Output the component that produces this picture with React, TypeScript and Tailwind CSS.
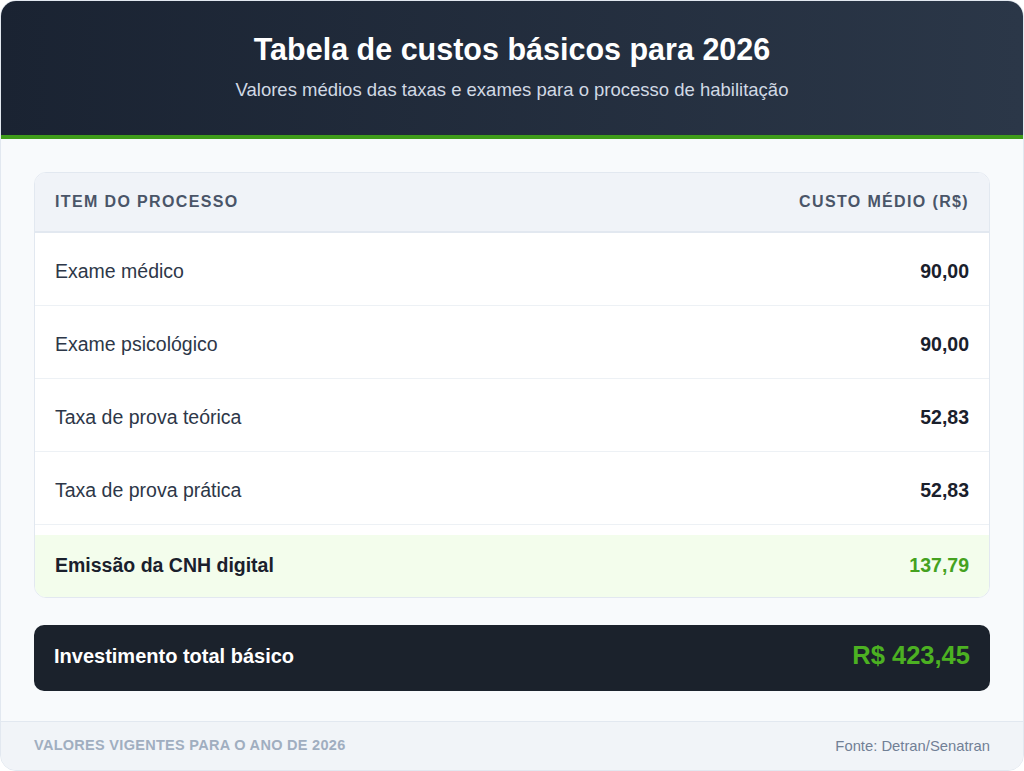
export default function App() {
  const rows = [
    { label: "Exame médico", value: "90,00" },
    { label: "Exame psicológico", value: "90,00" },
    { label: "Taxa de prova teórica", value: "52,83" },
    { label: "Taxa de prova prática", value: "52,83" },
  ];

  return (
    <div className="h-[771px] w-[1024px] bg-white font-['Liberation_Sans',Arial,sans-serif]">
      <div className="flex h-full flex-col overflow-hidden rounded-2xl border border-[#e2e8f0] bg-[#f8fafc]">
        {/* header */}
        <div className="flex h-[138px] shrink-0 flex-col items-center border-b-4 border-[#3f9c1a] bg-gradient-to-r from-[#1a2332] to-[#2b3748] pt-[30px]">
          <h1 className="text-[30.5px] leading-[36px] font-bold text-white">
            Tabela de custos básicos para 2026
          </h1>
          <p className="mt-[12px] text-[18.5px] leading-[22px] text-[#d1d9e4]">
            Valores médios das taxas e exames para o processo de habilitação
          </p>
        </div>

        <div className="flex flex-1 flex-col px-[33px] pt-[33px]">
          {/* table */}
          <div className="overflow-hidden rounded-xl border border-[#e2e8f0] bg-white">
            <div className="flex h-[60px] items-center justify-between border-b-2 border-[#e2e8f0] bg-[#f0f3f8] px-5 text-[16px] font-bold tracking-[0.085em] text-[#4a5568] uppercase">
              <span>Item do processo</span>
              <span>Custo médio (R$)</span>
            </div>
            {rows.map((r) => (
              <div
                key={r.label}
                className="flex h-[73px] items-center justify-between border-b border-[#edf1f5] px-5 pt-[6px] text-[19.5px]"
              >
                <span className="text-[#2d3748]">{r.label}</span>
                <span className="font-bold text-[#1a202c]">{r.value}</span>
              </div>
            ))}
            <div className="mt-[10px] flex h-[62px] items-center justify-between bg-[#f3fdec] px-5 text-[19.5px] font-bold">
              <span className="text-[#1a202c]">Emissão da CNH digital</span>
              <span className="text-[#45a21f]">137,79</span>
            </div>
          </div>

          {/* total */}
          <div className="mt-[27px] flex h-[66px] items-center justify-between rounded-[10px] bg-[#1b222c] px-5 pb-[5px]">
            <span className="text-[20px] font-bold text-white">Investimento total básico</span>
            <span className="text-[25.5px] font-bold text-[#4cb122]">R$ 423,45</span>
          </div>
        </div>

        {/* footer */}
        <div className="flex h-[49px] shrink-0 items-center justify-between border-t border-[#e2e8f0] bg-[#f1f4f8] px-[33px]">
          <span className="text-[14.5px] font-bold tracking-[0.02em] text-[#a0aec0] uppercase">
            Valores vigentes para o ano de 2026
          </span>
          <span className="text-[14.8px] text-[#718096]">Fonte: Detran/Senatran</span>
        </div>
      </div>
    </div>
  );
}
